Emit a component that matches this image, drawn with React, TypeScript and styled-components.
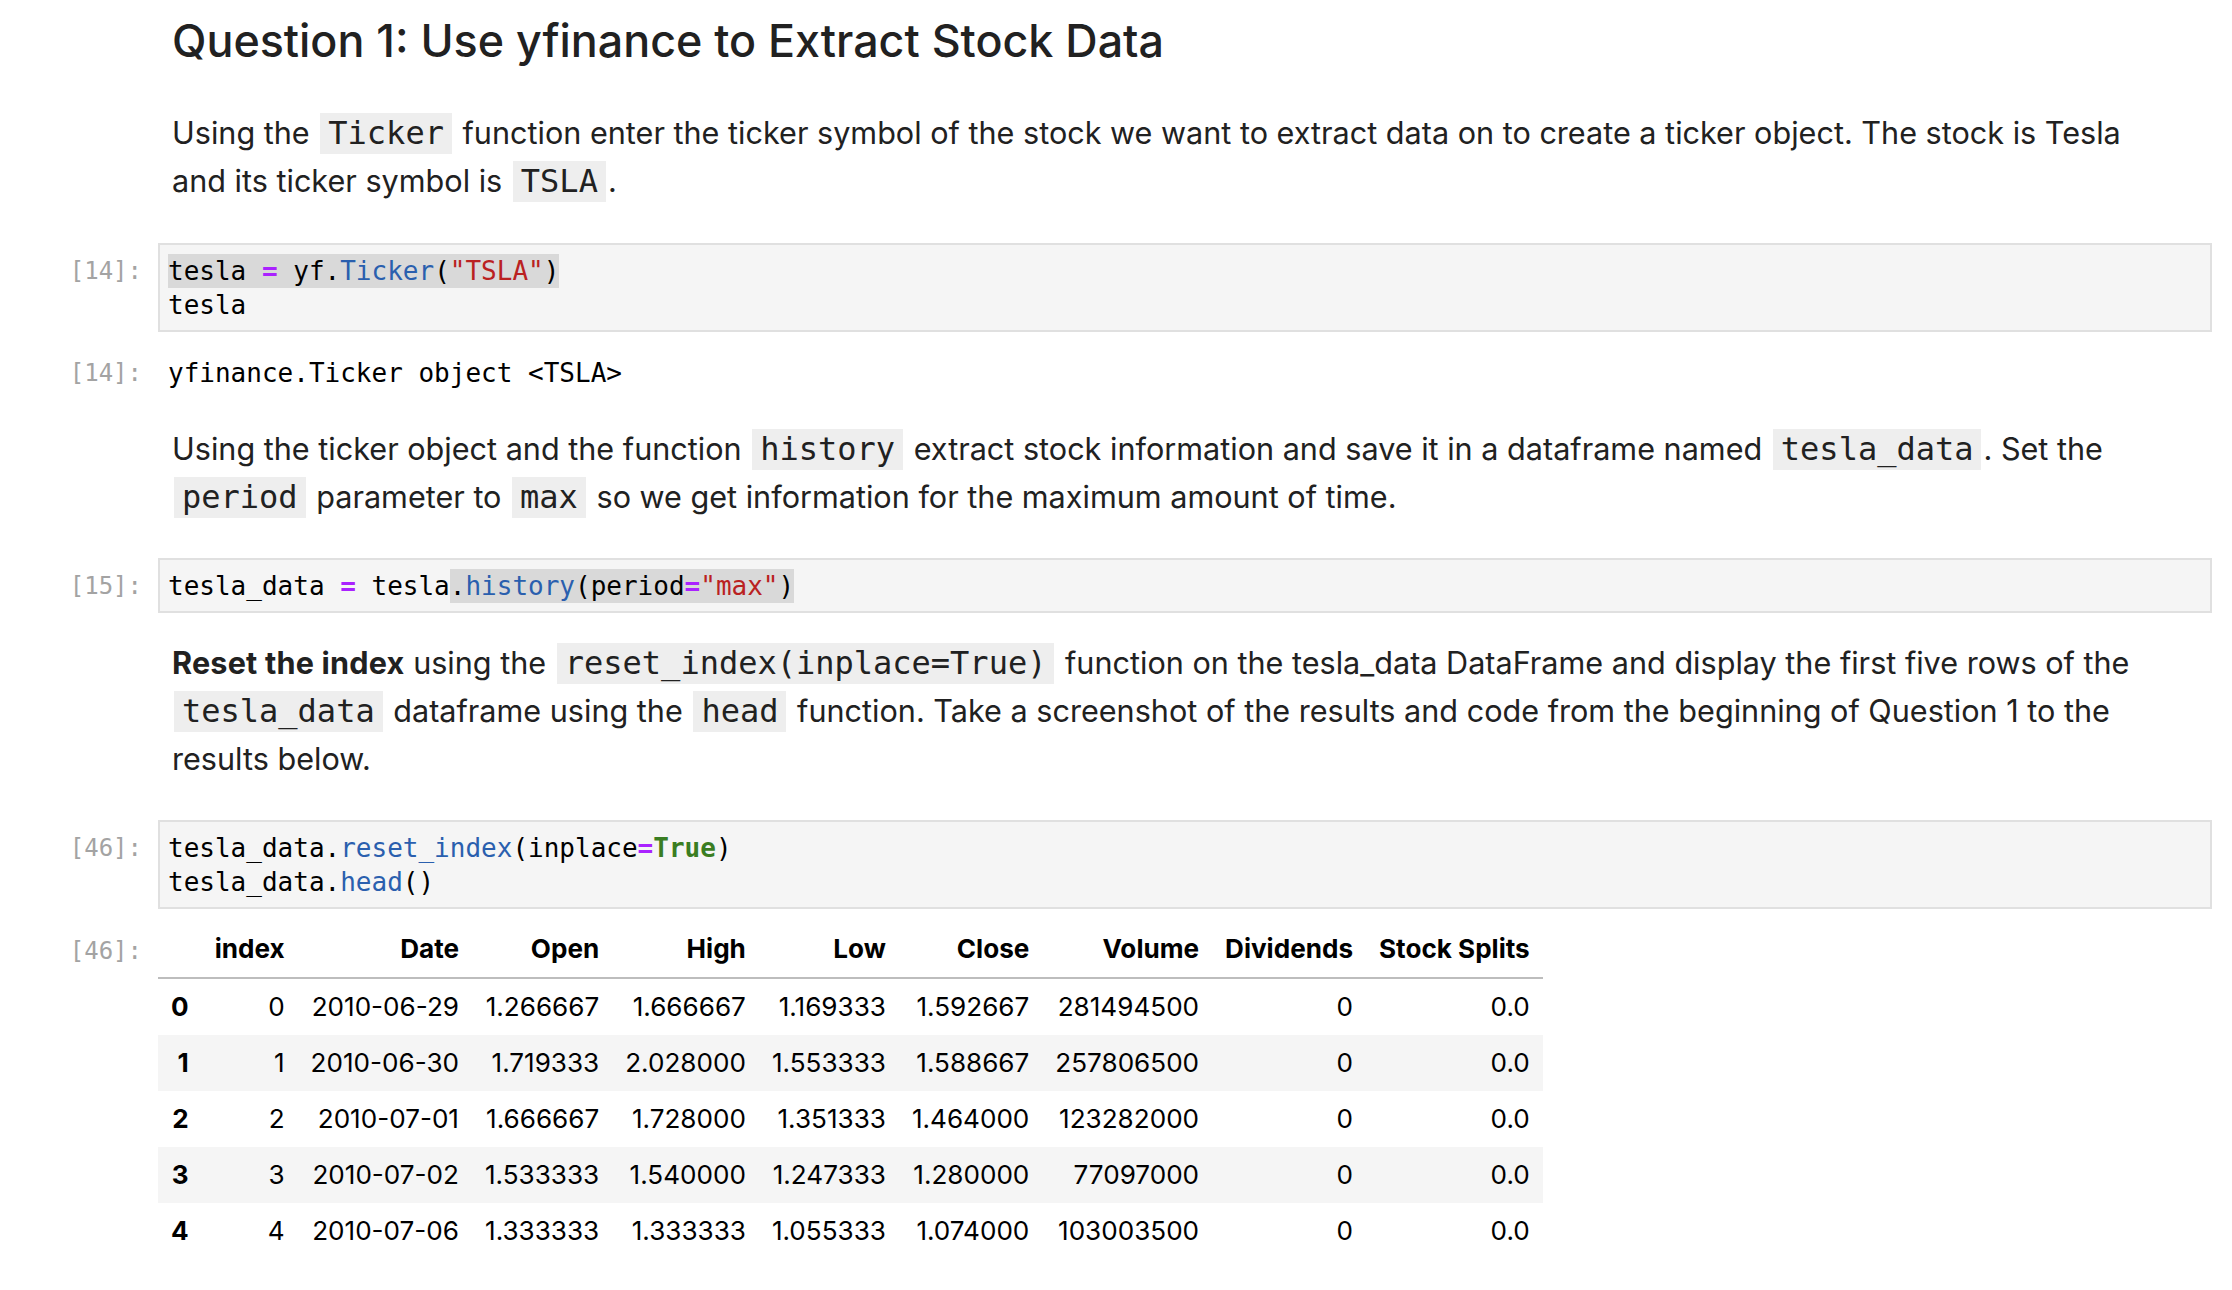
import React from 'react';
import styled, { createGlobalStyle } from 'styled-components';

const GlobalStyle = createGlobalStyle`
  html, body { margin: 0; padding: 0; background: #ffffff; }
  body { font-family: Inter, "Noto Sans", sans-serif; color: #212121; }
`;

const MONO = '"DejaVu Sans Mono", "Liberation Mono", monospace';
const SANS = 'Inter, "Noto Sans", sans-serif';

const Notebook = styled.main`
  width: 2232px;
  box-sizing: border-box;
  padding: 0 20px 40px 0;
  display: flex;
  flex-direction: column;
`;

const Row = styled.section<{ $mt: number }>`
  display: flex;
  align-items: flex-start;
  margin-top: ${(p) => p.$mt}px;
`;

const Prompt = styled.div<{ $pt: number }>`
  flex: 0 0 158px;
  box-sizing: border-box;
  padding: ${(p) => p.$pt}px 16px 0 0;
  text-align: right;
  font-family: ${MONO};
  font-size: 24px;
  line-height: 34px;
  color: #a3a3a3;
  white-space: pre;
`;

const Markdown = styled.div`
  flex: 1;
  min-width: 0;
  padding: 0 50px 0 14px;
  font-family: ${SANS};
  font-size: 30.6px;
  line-height: 48px;
  color: #212121;
`;

const Heading = styled.h2`
  margin: 0;
  font-size: 44.8px;
  line-height: 56px;
  font-weight: 500;
  color: #212121;
`;

const Para = styled.p`
  margin: 0;
`;

const Strong = styled.strong`
  font-weight: 700;
  letter-spacing: 0.2px;
`;

const InlineCode = styled.code`
  font-family: ${MONO};
  font-size: 32px;
  background: #eeeeee;
  padding: 1px 8px 2px;
  margin: 0 2px;
  color: #212121;
`;

const CodeBox = styled.div`
  flex: 1;
  min-width: 0;
  background: #f5f5f5;
  border: 2px solid #e0e0e0;
  padding: 9px 8px 8px;
  font-family: ${MONO};
  font-size: 26px;
  line-height: 34px;
  color: #000000;
  white-space: pre;
`;

const Line = styled.div``;

const Selected = styled.span`
  display: inline-block;
  background: #d9d9d9;
`;

const Op = styled.span`
  color: #aa22ff;
  font-weight: 700;
`;

const Prop = styled.span`
  color: #2a5fae;
`;

const Str = styled.span`
  color: #ba2121;
`;

const Kw = styled.span`
  color: #3a7d22;
  font-weight: 700;
`;

const OutputText = styled.div`
  flex: 1;
  padding: 0 10px;
  font-family: ${MONO};
  font-size: 26px;
  line-height: 34px;
  color: #000000;
  white-space: pre;
`;

const Table = styled.table`
  border-collapse: collapse;
  font-family: ${SANS};
  font-size: 26.1px;
  color: #000000;
`;

const HeadCell = styled.th`
  padding: 12px 13px;
  line-height: 32px;
  text-align: right;
  font-weight: 700;
  white-space: nowrap;
  border-bottom: 2px solid #bdbdbd;
`;

const BodyRow = styled.tr<{ $striped: boolean }>`
  background: ${(p) => (p.$striped ? '#f5f5f5' : 'transparent')};
`;

const RowHead = styled.th`
  padding: 12px 13px;
  line-height: 32px;
  text-align: right;
  font-weight: 700;
  white-space: nowrap;
`;

const Cell = styled.td`
  padding: 12px 13px;
  line-height: 32px;
  text-align: right;
  white-space: nowrap;
`;

const columns = ['', 'index', 'Date', 'Open', 'High', 'Low', 'Close', 'Volume', 'Dividends', 'Stock Splits'];

const rows = [
  ['0', '0', '2010-06-29', '1.266667', '1.666667', '1.169333', '1.592667', '281494500', '0', '0.0'],
  ['1', '1', '2010-06-30', '1.719333', '2.028000', '1.553333', '1.588667', '257806500', '0', '0.0'],
  ['2', '2', '2010-07-01', '1.666667', '1.728000', '1.351333', '1.464000', '123282000', '0', '0.0'],
  ['3', '3', '2010-07-02', '1.533333', '1.540000', '1.247333', '1.280000', '77097000', '0', '0.0'],
  ['4', '4', '2010-07-06', '1.333333', '1.333333', '1.055333', '1.074000', '103003500', '0', '0.0'],
];

export default function App() {
  return (
    <>
      <GlobalStyle />
      <Notebook>
        <Row $mt={13}>
          <Prompt $pt={0} />
          <Markdown>
            <Heading>Question 1: Use yfinance to Extract Stock Data</Heading>
          </Markdown>
        </Row>

        <Row $mt={40}>
          <Prompt $pt={0} />
          <Markdown>
            <Para>
              Using the <InlineCode>Ticker</InlineCode> function enter the ticker symbol of the stock we want to
              extract data on to create a ticker object. The stock is Tesla and its ticker symbol is{' '}
              <InlineCode>TSLA</InlineCode>.
            </Para>
          </Markdown>
        </Row>

        <Row $mt={38}>
          <Prompt $pt={11}>[14]:</Prompt>
          <CodeBox>
            <Line>
              <Selected>
                tesla <Op>=</Op> yf.<Prop>Ticker</Prop>(<Str>"TSLA"</Str>)
              </Selected>
            </Line>
            <Line>tesla</Line>
          </CodeBox>
        </Row>
        <Row $mt={24}>
          <Prompt $pt={0}>[14]:</Prompt>
          <OutputText>{'yfinance.Ticker object <TSLA>'}</OutputText>
        </Row>

        <Row $mt={35}>
          <Prompt $pt={0} />
          <Markdown>
            <Para>
              Using the ticker object and the function <InlineCode>history</InlineCode> extract stock information and
              save it in a dataframe named <InlineCode>tesla_data</InlineCode>. Set the <InlineCode>period</InlineCode>{' '}
              parameter to <InlineCode>max</InlineCode> so we get information for the maximum amount of time.
            </Para>
          </Markdown>
        </Row>

        <Row $mt={37}>
          <Prompt $pt={11}>[15]:</Prompt>
          <CodeBox>
            <Line>
              tesla_data <Op>=</Op> tesla
              <Selected>
                .<Prop>history</Prop>(period<Op>=</Op>
                <Str>"max"</Str>)
              </Selected>
            </Line>
          </CodeBox>
        </Row>

        <Row $mt={26}>
          <Prompt $pt={0} />
          <Markdown>
            <Para>
              <Strong>Reset the index</Strong> using the <InlineCode>reset_index(inplace=True)</InlineCode> function on
              the tesla_data DataFrame and display the first five rows of the <InlineCode>tesla_data</InlineCode>{' '}
              dataframe using the <InlineCode>head</InlineCode> function. Take a screenshot of the results and code
              from the beginning of Question 1 to the results below.
            </Para>
          </Markdown>
        </Row>

        <Row $mt={37}>
          <Prompt $pt={11}>[46]:</Prompt>
          <CodeBox>
            <Line>
              tesla_data.<Prop>reset_index</Prop>(inplace<Op>=</Op>
              <Kw>True</Kw>)
            </Line>
            <Line>
              tesla_data.<Prop>head</Prop>()
            </Line>
          </CodeBox>
        </Row>
        <Row $mt={12}>
          <Prompt $pt={13}>[46]:</Prompt>
          <Table>
            <thead>
              <tr>
                {columns.map((c, i) => (
                  <HeadCell key={i}>{c}</HeadCell>
                ))}
              </tr>
            </thead>
            <tbody>
              {rows.map((r, i) => (
                <BodyRow key={i} $striped={i % 2 === 1}>
                  <RowHead>{r[0]}</RowHead>
                  {r.slice(1).map((v, j) => (
                    <Cell key={j}>{v}</Cell>
                  ))}
                </BodyRow>
              ))}
            </tbody>
          </Table>
        </Row>
      </Notebook>
    </>
  );
}
